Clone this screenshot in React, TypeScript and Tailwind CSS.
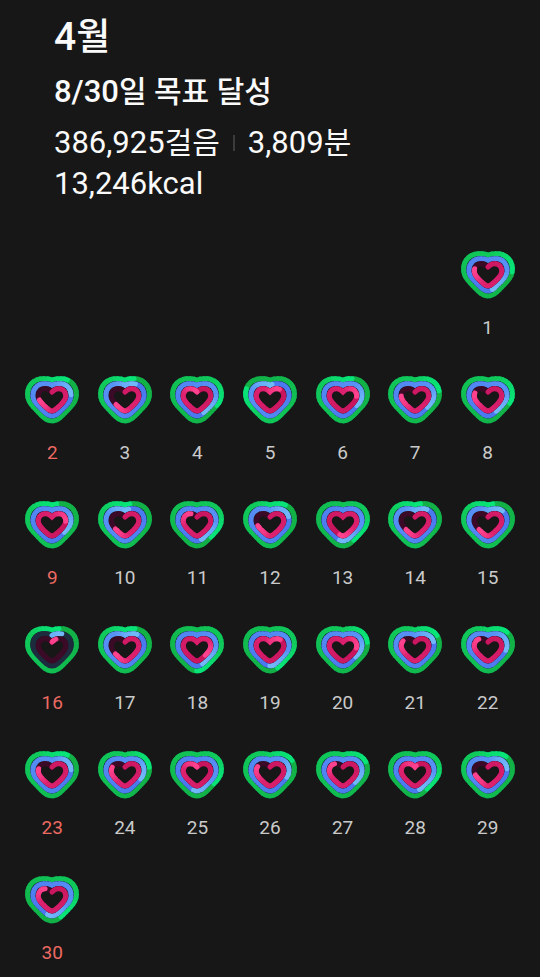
type Ring = {
  path: string;
  track: string;
  tail: number[];
  mid: number[];
  head: number[];
};

// Every heart starts at the notch and runs clockwise
const rings: Ring[] = [
  {
    path: 'M81 13C88 9 97 8 106 8C134 8 154 27 154 54C154 70 148 80 138 91C128 102 117 114 107 123C91 138 71 138 55 123C45 114 34 102 24 91C14 80 8 70 8 54C8 27 28 8 56 8C65 8 74 9 81 13Z',
    track: '#0d5a38',
    tail: [18, 174, 68],
    mid: [16, 202, 92],
    head: [8, 228, 120],
  },
  {
    path: 'M81 28C88 24 95 23 104 23C124 23 138 38 138 57C138 68 134 76 126 85C117 95 108 104 100 111C88 122 74 122 62 111C54 104 45 95 36 85C28 76 24 68 24 57C24 38 38 23 58 23C67 23 74 24 81 28Z',
    track: '#1c2b3d',
    tail: [72, 118, 238],
    mid: [88, 146, 246],
    head: [112, 184, 250],
  },
  {
    path: 'M81 48C87 42 93 38 101 38C113 38 122 47 122 60C122 68 118 74 112 81C106 88 99 94 93 99C85 106 77 106 69 99C63 94 56 88 50 81C44 74 40 68 40 60C40 47 49 38 61 38C69 38 75 42 81 48Z',
    track: '#3a0a26',
    tail: [198, 20, 92],
    mid: [222, 34, 112],
    head: [254, 66, 142],
  },
];

// Steps, active time and calories as laps of the heart, 1 is the daily goal
const days = [
  [1.25, 1.455, 0.79],
  [1.11, 1.23, 0.71],
  [1.065, 1.095, 0.64],
  [1.32, 1.43, 1],
  [1.8, 1.02, 1.13],
  [1.065, 1.34, 1.24],
  [1.21, 1.36, 0.76],
  [1.3, 1.41, 0.8],
  [1.035, 1.36, 1.24],
  [1.035, 1.035, 0.65],
  [1.38, 1.455, 0.91],
  [1.11, 1.2, 0.7],
  [1.41, 1.53, 1.54],
  [1.04, 1.11, 0.64],
  [1.035, 1.135, 0.64],
  [1.05, 0.09, 0.06],
  [1.07, 1.11, 0.65],
  [1.5, 1.445, 1.37],
  [1.44, 1.5, 1.14],
  [1.22, 1.355, 1.26],
  [1.17, 1.2, 0.83],
  [1.14, 1.28, 0.87],
  [1.11, 1.23, 0.79],
  [1.22, 1.32, 0.81],
  [1.35, 1.53, 1],
  [1.17, 1.3, 0.82],
  [1.18, 1.36, 0.88],
  [1.4, 1.455, 1.02],
  [1.13, 1.22, 0.71],
  [1.43, 1.54, 0.9],
];

const mix = (from: number[], to: number[], t: number) =>
  `rgb(${from.map((c, i) => Math.round(c + (to[i] - c) * t)).join(',')})`;

// back is the distance behind the head, in laps
function colorAt(ring: Ring, back: number) {
  if (back < 0.1) return mix(ring.head, ring.mid, (back / 0.1) * 0.3);
  if (back < 0.2) return mix(ring.head, ring.mid, 0.3 + ((back - 0.1) / 0.1) * 0.7);
  return mix(ring.mid, ring.tail, (back - 0.2) / 0.8);
}

function HeartRing({ ring, value }: { ring: Ring; value: number }) {
  const start = Math.max(0, value - 1);
  const length = value - start;
  const count = Math.max(2, Math.round(length * 40));
  const step = length / count;

  return (
    <g fill="none">
      <path d={ring.path} stroke={ring.track} strokeWidth={16} />
      {value < 1 && (
        <path
          d={ring.path}
          pathLength={100}
          stroke={colorAt(ring, length)}
          strokeWidth={15}
          strokeLinecap="round"
          strokeDasharray="0.1 99.9"
        />
      )}
      {[...Array(count)].map((_, i) => {
        const last = i === count - 1;
        const dash = (last ? step : step * 1.3) * 100;
        return (
          <path
            key={i}
            d={ring.path}
            pathLength={100}
            stroke={colorAt(ring, length - (i + 1) * step)}
            strokeWidth={15}
            strokeLinecap={last ? 'round' : 'butt'}
            strokeDasharray={`${dash} ${100 - dash}`}
            strokeDashoffset={-(start + i * step) * 100}
          />
        );
      })}
    </g>
  );
}

function Heart({ values }: { values: number[] }) {
  return (
    <svg viewBox="0 0 162 144" className="w-[54px] h-12" aria-hidden="true">
      {rings.map((ring, i) => (
        <HeartRing key={i} ring={ring} value={values[i]} />
      ))}
    </svg>
  );
}

export default function App() {
  return (
    <main className="min-h-screen bg-[#171717] text-[#fafafa] font-['Roboto','Noto_Sans_CJK_KR',sans-serif]">
      {/* Monthly summary */}
      <header className="px-[54px] pt-[13px]">
        <h1 className="text-[39px] leading-12 font-medium">
          4<span className="text-[37px]">월</span>
        </h1>
        <h2 className="mt-2 text-[31px] leading-11 font-medium">
          8/30<span className="text-[30px]">일 목표 달성</span>
        </h2>
        <div className="mt-2 flex flex-wrap items-center text-[31px] leading-[41px]">
          <span>
            386,925<span className="text-[30px]">걸음</span>
          </span>
          <span className="mx-[13px] h-4 w-0.5 bg-[#3c3c3c]"></span>
          <span>
            3,809<span className="text-[30px]">분</span>
          </span>
          <span className="basis-full">13,246kcal</span>
        </div>
      </header>

      {/* Calendar */}
      <ol className="mt-[47px] grid grid-cols-7 gap-y-9 px-4">
        {days.map((values, i) => (
          <li
            key={i}
            className={`flex flex-col items-center ${i === 0 ? 'col-start-7' : ''}`}
          >
            <Heart values={values} />
            <span
              className={`mt-[17px] text-[19px] leading-6 ${
                i % 7 === 1 ? 'text-[#ec6a62]' : 'text-[#cacaca]'
              }`}
            >
              {i + 1}
            </span>
          </li>
        ))}
      </ol>
    </main>
  );
}
